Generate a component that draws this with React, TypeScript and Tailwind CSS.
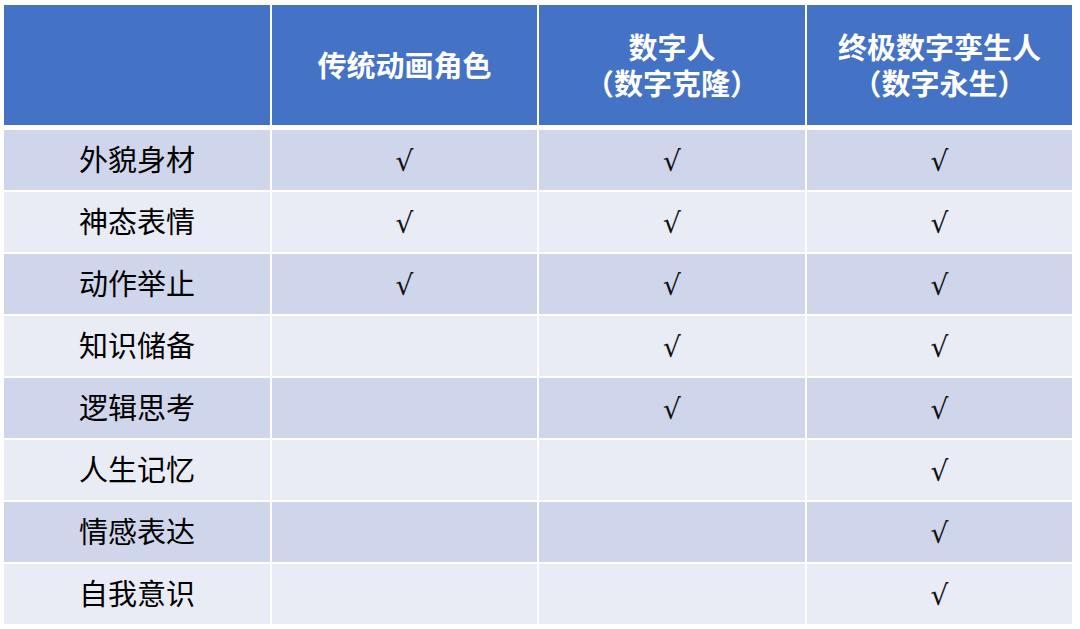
const headers = ["", "传统动画角色", "数字人\n（数字克隆）", "终极数字孪生人\n（数字永生）"];

const rows: [string, boolean, boolean, boolean][] = [
  ["外貌身材", true, true, true],
  ["神态表情", true, true, true],
  ["动作举止", true, true, true],
  ["知识储备", false, true, true],
  ["逻辑思考", false, true, true],
  ["人生记忆", false, false, true],
  ["情感表达", false, false, true],
  ["自我意识", false, false, true],
];

const font = { fontFamily: '"Noto Sans CJK SC", "Noto Sans", sans-serif' };
const checkFont = { fontFamily: '"DejaVu Sans", sans-serif' };

export default function App() {
  return (
    <div className="w-[1080px] h-[629px] bg-white pl-[4px] pt-[5px]" style={font}>
      <div className="grid grid-cols-[266px_265px_266px_265px] gap-x-[2px] w-[1068px]">
        {headers.map((h, i) => (
          <div
            key={i}
            className="h-[120px] bg-[#4472c4] text-white font-semibold text-[29px] leading-[36px] flex items-center justify-center text-center whitespace-pre-line pb-[2px]"
          >
            {h}
          </div>
        ))}
      </div>
      <div className="grid grid-cols-[266px_265px_266px_265px] gap-[2px] w-[1068px] mt-[5px]">
        {rows.map((r, ri) => {
          const bg = ri % 2 === 0 ? "bg-[#cfd5ea]" : "bg-[#e9ebf5]";
          return [
            <div key={`${ri}-l`} className={`h-[60px] ${bg} flex items-center justify-center text-[29px] text-black pb-[2px]`}>
              {r[0]}
            </div>,
            ...[r[1], r[2], r[3]].map((v, ci) => (
              <div key={`${ri}-${ci}`} className={`h-[60px] ${bg} flex items-center justify-center`}>
                {v ? (
                  <span className="inline-block text-[28px] leading-none text-[#111] mt-[3px]" style={checkFont}>
                    √
                  </span>
                ) : null}
              </div>
            )),
          ];
        })}
      </div>
    </div>
  );
}
